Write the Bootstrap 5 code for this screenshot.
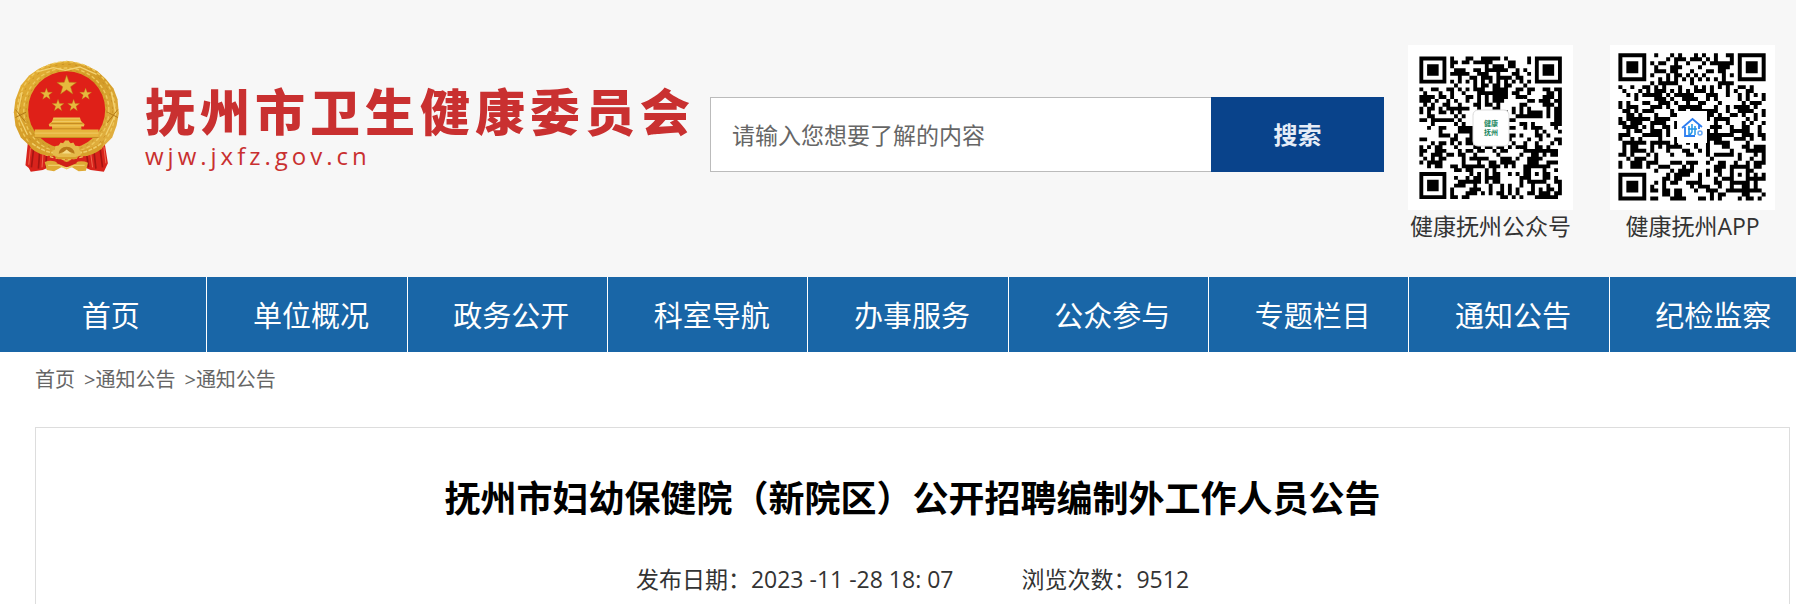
<!DOCTYPE html>
<html lang="zh-CN">
<head>
<meta charset="utf-8">
<meta name="viewport" content="width=device-width, initial-scale=1">
<title>抚州市卫生健康委员会</title>
<link href="https://cdn.jsdelivr.net/npm/bootstrap@5.3.0/dist/css/bootstrap.min.css" rel="stylesheet">
<style>
  body { font-family: "Open Sans", "Noto Sans CJK SC", sans-serif; color: #333; overflow-x: hidden; }
  a { color: inherit; text-decoration: none; }
  .site-head { background: #f7f7f7; padding: 45px 21px 0 12px; min-height: 277px; }
  .brand { gap: 25px; padding-top: 15px; }
  .emblem { width: 108px; height: 113px; }
  .brand-text { color: #c93030; padding-top: 24px; }
  .brand-name { font-size: 50px; line-height: 56px; font-weight: 900; letter-spacing: 5px; }
  .brand-url { font-size: 24px; line-height: 32px; font-weight: 500; letter-spacing: 4px; }
  .search-box { height: 75px; margin: 52px 24px 0 15px; }
  .search-box .form-control { border: 1px solid #bbb; border-right: 0; border-radius: 0; padding: 0 21px; font-size: 23px; color: #666; }
  .search-box .form-control::placeholder { color: #666; }
  .search-box .btn { width: 173px; background: #09438b; color: #e6edf7; border: 0; border-radius: 0; font-size: 24px; font-weight: 700; }
  .codes { gap: 37px; }
  .code { width: 165px; }
  .code svg { display: block; width: 165px; height: 165px; background: #fff; }
  .code figcaption { font-size: 23px; line-height: 32px; text-align: center; white-space: nowrap; }
  .main-nav { background: #1966a7; height: 75px; padding-left: 7px; overflow: hidden; }
  .main-nav ul { display: grid; grid-template-columns: repeat(9, 1fr); margin: 0 -14px 0 0; padding: 0; list-style: none; }
  .main-nav li { border-right: 1px solid #fff; }
  .main-nav a { display: block; padding-left: 8px; line-height: 78px; font-size: 29px; color: #fff; text-align: center; white-space: nowrap; }
  .crumbs { padding: 13px 35px 0; gap: 9px; height: 75px; font-size: 20px; line-height: 30px; color: #666; }
  .article { margin: 0 6px 0 35px; border: 1px solid #ddd; border-bottom: 0; padding-top: 46px; min-height: 177px; }
  .article h1 { font-size: 36px; line-height: 50px; font-weight: 700; color: #000; margin-bottom: 39px; }
  .meta { gap: 68px; font-size: 23px; line-height: 32px; }
</style>
</head>
<body>
<header class="site-head d-flex align-items-start">
  <a class="brand d-flex flex-shrink-0" href="#">
    <svg class="emblem" viewBox="36 27 324 340" aria-hidden="true">
      <defs>
        <linearGradient id="gold" x1="0" y1="0" x2="1" y2="1"><stop offset="0" stop-color="#e8b53a"/><stop offset=".5" stop-color="#d39b27"/><stop offset="1" stop-color="#e6b648"/></linearGradient>
        <path id="star" d="M0-10 2.4-3.2 9.5-3.1 3.8 1.2 5.9 8.1 0 4-5.9 8.1-3.8 1.2-9.5-3.1-2.4-3.2Z"/>
      </defs>
      <path d="M84 268 76 344 86 352 92 363 128 358 150 348H250L272 358 312 363 324 338 312 262Z" fill="#d8231c"/>
      <path d="M101 290 94 350M119 300 115 354M140 308 137 350M260 310 266 350M282 300 288 354M300 290 308 350" stroke="#a51512" stroke-width="5" fill="none"/>
      <path d="M91 292 86 342M129 306 126 350M272 306 278 350M312 288 318 338" stroke="#f36a50" stroke-width="3" fill="none"/>
      <path d="M200 29 226 34 258 43 292 60 318 84 341 113 353 145 357 188 350 225 337 260 306 292 260 315H144L98 294 62 260 46 225 41 184 46 146 62 104 87 74 116 53 151 38Z" fill="url(#gold)"/>
      <g fill="none" stroke="#efc95c" stroke-width="4" stroke-dasharray="11 7"><circle cx="199" cy="179" r="147"/><circle cx="199" cy="179" r="128"/></g>
      <g fill="none" stroke="#c08a20" stroke-width="2" stroke-dasharray="7 13"><circle cx="199" cy="179" r="139"/><circle cx="199" cy="179" r="121"/></g>
      <path d="M66 123 52 188 82 252M334 123 348 188 318 252M110 63 160 50 196 58 240 48 290 70" fill="none" stroke="#f3d272" stroke-width="4"/>
      <path d="M46 200 78 184M46 176 78 216M354 200 322 184M354 176 322 216" stroke="#b47a18" stroke-width="3"/>
      <circle cx="200" cy="177" r="116" fill="#df2018"/>
      <g fill="#e7b83d" stroke="#b87a14" stroke-width=".5"><use href="#star" transform="translate(200 104) scale(3.1)"/><use href="#star" transform="translate(139 130) scale(1.9)"/><use href="#star" transform="translate(257 130) scale(1.9)"/><use href="#star" transform="translate(174 164) scale(1.9)"/><use href="#star" transform="translate(221 164) scale(1.9)"/></g>
      <path d="M160 201H240L244 212 254 220 252 226H244V236H296V262H104V236H156V226H148L146 220 156 212Z" fill="#e7b33c"/>
      <path d="M156 212H244M148 225H252M104 247H296M160 202H240" stroke="#f0ca62" stroke-width="3"/>
      <path d="M154 218H248M156 234H244M104 260H296" stroke="#c68b22" stroke-width="3"/>
      <path d="M84 266Q120 294 164 300 180 274 200 274 220 274 236 300 282 294 314 266L306 294Q268 322 238 315L228 326H172L162 315Q120 318 92 292Z" fill="#d89f2b"/>
      <path d="M176 284 182 275 190 278 195 269H206L211 278 220 275 226 285 236 286 238 298 247 304 240 314 226 319H174L160 313 154 304 164 297 166 286Z" fill="#e5ba4b"/>
      <path d="M176 309Q178 289 200 288 222 289 224 309L200 300Z" fill="#b97918"/>
      <path d="M186 308 200 296 214 308Z" fill="#f4d983"/>
      <path d="M96 278Q128 302 158 306M304 278Q272 302 242 306" stroke="#efcc66" stroke-width="5" stroke-dasharray="12 4" fill="none"/>
      <path d="M134 334Q154 326 174 336L200 326 226 336Q244 328 264 336L258 360 236 362 216 350H184L162 362 140 358Z" fill="#dfaa35"/>
      <path d="M170 324 200 334 230 324V338L200 350 170 338Z" fill="#cf2119"/>
      <path d="M144 344H178L200 354 222 344H254" fill="none" stroke="#f0cd68" stroke-width="4"/>
    </svg>
    <div class="brand-text text-nowrap">
      <div class="brand-name">抚州市卫生健康委员会</div>
      <div class="brand-url">wjw.jxfz.gov.cn</div>
    </div>
  </a>
  <form class="search-box d-flex flex-grow-1" role="search">
    <input class="form-control h-100" type="search" aria-label="搜索内容" placeholder="请输入您想要了解的内容">
    <button class="btn flex-shrink-0" type="button">搜索</button>
  </form>
  <div class="codes d-flex flex-shrink-0">
    <figure class="code m-0">
      <svg viewBox="0 0 165 165" role="img" aria-label="健康抚州公众号二维码">
        <g data-qr="41" transform="translate(11.4 11.6) scale(3.85)"></g>
        <rect x="65" y="65" width="36" height="36" rx="5" fill="#fff" stroke="#ddd"/>
        <g fill="#218660" font-size="7" font-weight="700" text-anchor="middle"><text x="83" y="81">健康</text><text x="83" y="90">抚州</text></g>
      </svg>
      <figcaption>健康抚州公众号</figcaption>
    </figure>
    <figure class="code m-0">
      <svg viewBox="0 0 165 165" role="img" aria-label="健康抚州APP二维码">
        <g data-qr="97" transform="translate(8.4 8.3) scale(3.98)"></g>
        <rect x="67" y="66" width="30" height="32" fill="#fff"/>
        <path d="M72 83 82.500 74 92 82M75 82V91H85M89 80V84" fill="none" stroke="#2c7df0" stroke-width="1.800"/>
        <path d="M79 81V90M82 79V87L80 90M85 81V90M78 84H87" fill="none" stroke="#2196e8" stroke-width="1.500"/>
        <circle cx="90" cy="88" r="2" fill="none" stroke="#66a8f5" stroke-width="1.500"/>
      </svg>
      <figcaption>健康抚州APP</figcaption>
    </figure>
  </div>
</header>

<nav class="main-nav" aria-label="主导航">
  <ul>
    <li><a href="#">首页</a></li><li><a href="#">单位概况</a></li><li><a href="#">政务公开</a></li>
    <li><a href="#">科室导航</a></li><li><a href="#">办事服务</a></li><li><a href="#">公众参与</a></li>
    <li><a href="#">专题栏目</a></li><li><a href="#">通知公告</a></li><li><a href="#">纪检监察</a></li>
  </ul>
</nav>

<nav class="crumbs d-flex" aria-label="当前位置">
  <a href="#">首页</a><span>&gt;<a href="#">通知公告</a></span><span>&gt;<a href="#">通知公告</a></span>
</nav>

<main class="article">
  <h1 class="text-center">抚州市妇幼保健院（新院区）公开招聘编制外工作人员公告</h1>
  <div class="meta d-flex justify-content-center">
    <span>发布日期：2023 -11 -28 18: 07</span><span>浏览次数：9512</span>
  </div>
</main>

<script src="https://cdn.jsdelivr.net/npm/bootstrap@5.3.0/dist/js/bootstrap.bundle.min.js"></script>
<script>
  // Draws a 37 x 37 code: finder, timing and alignment marks, then the data modules.
  const ring = (x, y, cx, cy) => Math.max(Math.abs(x - cx), Math.abs(y - cy));
  document.querySelectorAll('[data-qr]').forEach(g => {
    let s = +g.dataset.qr, d = '';
    const next = () => (s = (s * 1103515245 + 12345) % 2147483648) / 2147483648;
    for (let y = 0; y < 37; y++) for (let x = 0; x < 37; x++) {
      let on = next() < 0.5;
      for (const [cx, cy] of [[3, 3], [33, 3], [3, 33]]) {
        const r = ring(x, y, cx, cy);
        if (r <= 4) on = r < 2 || r === 3;
      }
      if (x > 8 && x < 28 && y === 6) on = x % 2 === 0;
      if (y > 8 && y < 28 && x === 6) on = y % 2 === 0;
      const a = ring(x, y, 30, 30);
      if (a <= 2) on = a !== 1;
      if (on) d += `M${x} ${y}h1v1h-1z`;
    }
    const p = document.createElementNS('http://www.w3.org/2000/svg', 'path');
    p.setAttribute('d', d);
    g.appendChild(p);
  });
</script>
</body>
</html>
